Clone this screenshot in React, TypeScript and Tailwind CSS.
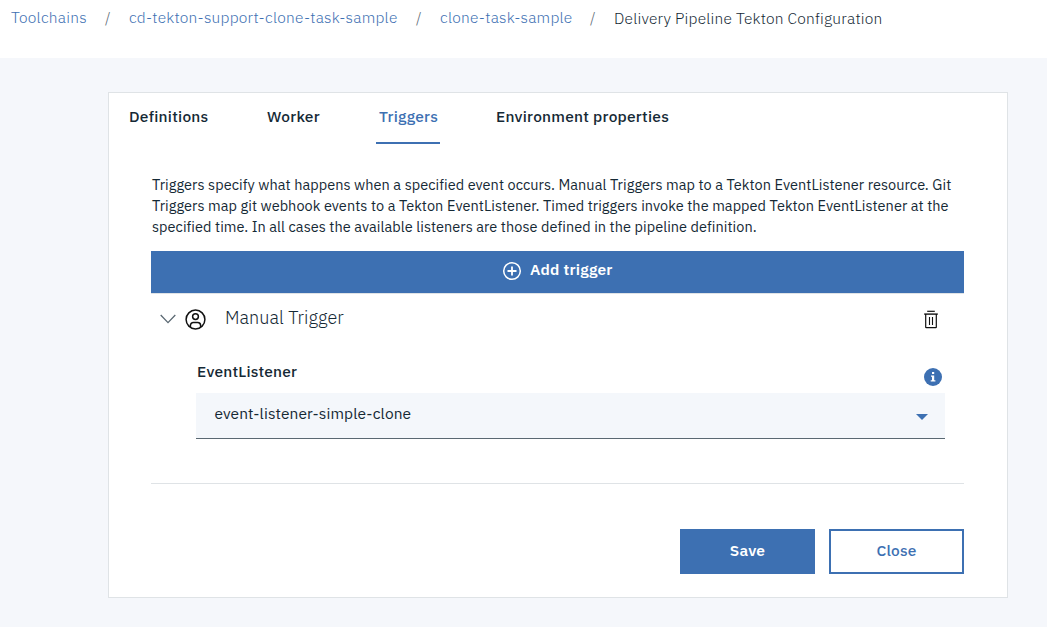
const crumbs = [
  { label: 'Toolchains', cls: 'w-[94px]' },
  { label: 'cd-tekton-support-clone-task-sample', cls: 'w-[287px]' },
  { label: 'clone-task-sample', cls: 'w-[150px]' },
];

const tabs = [
  { label: 'Definitions', cls: 'ml-[20px] w-[80px]' },
  { label: 'Worker', cls: 'ml-[58px] w-[54px]' },
  { label: 'Triggers', cls: 'ml-[55px] w-[64px] pl-[3px] border-b-2 border-[#3d70b2] text-[#3d70b2]' },
  { label: 'Environment properties', cls: 'ml-[56px] w-[176px]' },
];

const lines = [
  'Triggers specify what happens when a specified event occurs. Manual Triggers map to a Tekton EventListener resource. Git',
  'Triggers map git webhook events to a Tekton EventListener. Timed triggers invoke the mapped Tekton EventListener at the',
  'specified time. In all cases the available listeners are those defined in the pipeline definition.',
];

function AddIcon() {
  return (
    <svg className="-mt-[2px]" width="20" height="20" viewBox="0 0 20 20" fill="none" stroke="#fff">
      <circle cx="10" cy="10" r="8.3" strokeWidth="1.5" />
      <path d="M10 5.5v9M5.5 10h9" strokeWidth="1.8" />
    </svg>
  );
}

function UserIcon() {
  return (
    <svg width="21" height="21" viewBox="0 0 21 21" fill="none" stroke="#111" strokeWidth="1.5">
      <circle cx="10.5" cy="10.5" r="9.4" />
      <circle cx="10.5" cy="7.6" r="2.9" />
      <path d="M5.4 18v-1.6a2.9 2.9 0 0 1 2.9-2.9h4.4a2.9 2.9 0 0 1 2.9 2.9V18" />
    </svg>
  );
}

function TrashIcon() {
  return (
    <svg width="14" height="19" viewBox="0 0 14 19" fill="none" stroke="#111">
      <path d="M3.2 1.3h7.6" strokeWidth="1.2" />
      <path d="M0.2 4.1h13.6" strokeWidth="1.4" />
      <path d="M1.7 4v13.2q0 .5.5.5h9.6q.5 0 .5-.5V4" strokeWidth="1.2" />
      <path d="M5.5 7v8M8.5 7v8" strokeWidth="1.1" />
    </svg>
  );
}

export default function App() {
  return (
    <div className="flex h-[627px] w-[1047px] flex-col overflow-hidden bg-[#f5f7fb] font-['IBM_Plex_Sans',Roboto,sans-serif] text-[#152935]">
      <nav className="flex h-[58px] shrink-0 items-start bg-white pl-[11px] pt-[5px] text-[15.5px] font-[350] leading-6 tracking-[0.235px] whitespace-nowrap">
        {crumbs.map((c) => (
          <div key={c.label} className="flex">
            <a className={`block shrink-0 text-[#3d70b2] ${c.cls}`}>{c.label}</a>
            <span className="w-[24px] shrink-0 text-[#5a6872]">/</span>
          </div>
        ))}
        <span className="pt-px tracking-[0.21px]">Delivery Pipeline Tekton Configuration</span>
      </nav>

      <main className="ml-[108px] mt-[34px] flex h-[506px] w-[900px] shrink-0 flex-col border border-[#dfe3e6] bg-white">
        <div className="flex h-[51px] shrink-0 text-[15.5px] font-medium leading-[47px] tracking-[0.24px] whitespace-nowrap">
          {tabs.map((t) => (
            <div key={t.label} className={`shrink-0 ${t.cls}`}>{t.label}</div>
          ))}
        </div>

        <section className="ml-[42px] flex w-[813px] flex-col">
          <div className="mt-[30px] flex h-[77px] flex-col pl-px text-[14.5px] leading-[21px] tracking-[0.052px] whitespace-nowrap">
            {lines.map((l) => (
              <div key={l}>{l}</div>
            ))}
          </div>

          <button className="flex h-[42px] items-center bg-[#3d70b2] pl-[351px] text-[15.5px] font-semibold text-white">
            <AddIcon />
            <span className="-mt-[5px] ml-[8px] tracking-[0.2px]">Add trigger</span>
          </button>

          <div className="flex h-[191px] flex-col border-y border-[#dfe3e6]">
            <div className="flex h-[51px] items-center pl-[9px] pr-[26px]">
              <svg className="-mt-px" width="16" height="10" viewBox="0 0 16 10" fill="none" stroke="#5a6872" strokeWidth="1.3">
                <path d="M0.7 1 8 8.6 15.3 1" />
              </svg>
              <span className="-mt-px ml-[9px]"><UserIcon /></span>
              <span className="-mt-[4px] ml-[19px] text-[18px] font-light tracking-[0.05px]">Manual Trigger</span>
              <span className="ml-auto"><TrashIcon /></span>
            </div>

            <div className="ml-[45px] mt-[13px] flex w-[749px] flex-col">
              <div className="flex h-[35px] justify-between pl-px pr-[3px]">
                <label className="pt-px text-[15.5px] font-medium leading-[24px] tracking-[0.2px]">EventListener</label>
                <svg className="mt-[10px]" width="18" height="18" viewBox="0 0 18 18">
                  <circle cx="9" cy="9" r="9" fill="#3d70b2" />
                  <path d="M8 4h2.2v2H8zM7 7.5h3.2v4.8h1.2v1.3H6.7v-1.3H8V8.8H7z" fill="#fff" />
                </svg>
              </div>
              <div className="flex h-[46px] items-center justify-between border-b border-[#5a6872] bg-[#f4f7fb] pl-[18.5px] pr-[17px] text-[15.5px]">
                <span className="-mt-[4px] tracking-[0.1px]">event-listener-simple-clone</span>
                <svg className="mt-[3px]" width="12" height="6" viewBox="0 0 12 6" fill="#3d70b2"><path d="M0 0h12L6 6z" /></svg>
              </div>
            </div>
          </div>

          <div className="mt-[45px] flex justify-end gap-[14px] text-[15.5px] tracking-[0.2px]">
            <button className="h-[45px] w-[135px] bg-[#3d70b2] pb-[2px] font-semibold text-white">Save</button>
            <button className="h-[45px] w-[135px] border-2 border-[#3d70b2] pb-[2px] font-medium text-[#3d70b2]">Close</button>
          </div>
        </section>
      </main>
    </div>
  );
}
